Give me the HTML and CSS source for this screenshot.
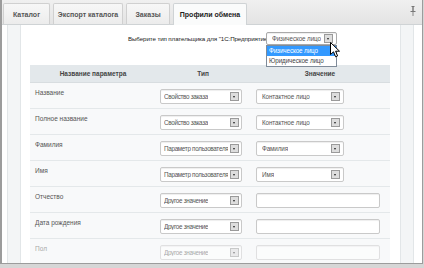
FILE: index.html
```html
<!DOCTYPE html>
<html>

<head>
	<title>Профили обмена</title>
	<link rel="stylesheet" href="styles.css">
</head>

<body>
	<div class="frame">
		<div class="tabs">
			<div class="tab t1">Каталог</div>
			<div class="tab t2">Экспорт каталога</div>
			<div class="tab t3">Заказы</div>
			<div class="tab active">Профили обмена</div>
			<div class="spacer"></div>
			<svg class="pin" width="6" height="10" viewBox="0 0 6 10">
				<rect x="1.5" y="0" width="3" height="1" fill="#777"/>
				<rect x="2" y="1" width="2" height="4" fill="#999"/>
				<rect x="0.5" y="5" width="5" height="1" fill="#777"/>
				<rect x="2.5" y="6" width="1" height="4" fill="#888"/>
			</svg>
		</div>
		<div class="body">
			<div class="rail"></div>
			<div class="content">
				<div class="payer">
					<span class="payer-label">Выберите тип плательщика для "1С:Предприятие":</span>
					<div class="payer-box">
						<div class="sel payer-sel"><span>Физическое лицо</span><i class="btn"></i></div>
						<ul class="list">
							<li class="on">Физическое лицо</li>
							<li>Юридическое лицо</li>
						</ul>
						<svg class="cursor" width="11" height="16" viewBox="0 0 11 16">
							<path d="M0.5 0.5 L0.5 12.5 L3.5 9.8 L5.6 14.8 L7.6 13.9 L5.6 9.2 L9.5 9.2 Z" fill="#fff" stroke="#000" stroke-width="1"/>
						</svg>
					</div>
				</div>
				<table class="params">
					<tr>
						<th class="c1">Название параметра</th>
						<th class="c2">Тип</th>
						<th class="c3">Значение</th>
					</tr>
					<tr>
						<td class="name">Название</td>
						<td><div class="sel type"><span>Свойство заказа</span><i class="btn"></i></div></td>
						<td><div class="sel val"><span>Контактное лицо</span><i class="btn"></i></div></td>
					</tr>
					<tr>
						<td class="name">Полное название</td>
						<td><div class="sel type"><span>Свойство заказа</span><i class="btn"></i></div></td>
						<td><div class="sel val"><span>Контактное лицо</span><i class="btn"></i></div></td>
					</tr>
					<tr>
						<td class="name">Фамилия</td>
						<td><div class="sel type"><span>Параметр пользователя</span><i class="btn"></i></div></td>
						<td><div class="sel val"><span>Фамилия</span><i class="btn"></i></div></td>
					</tr>
					<tr>
						<td class="name">Имя</td>
						<td><div class="sel type"><span>Параметр пользователя</span><i class="btn"></i></div></td>
						<td><div class="sel val"><span>Имя</span><i class="btn"></i></div></td>
					</tr>
					<tr>
						<td class="name">Отчество</td>
						<td><div class="sel type"><span>Другое значение</span><i class="btn"></i></div></td>
						<td><div class="field"></div></td>
					</tr>
					<tr>
						<td class="name">Дата рождения</td>
						<td><div class="sel type"><span>Другое значение</span><i class="btn"></i></div></td>
						<td><div class="field"></div></td>
					</tr>
					<tr class="faded">
						<td class="name">Пол</td>
						<td><div class="sel type"><span>Другое значение</span><i class="btn"></i></div></td>
						<td><div class="field"></div></td>
					</tr>
				</table>
			</div>
			<div class="rail right"></div>
		</div>
	</div>
</body>

</html>
```

FILE: styles.css
```css
html,
body {
	margin: 0;
	padding: 0;
}

body {
	background: #d6d6d6;
	font-family: "Liberation Sans", Arial, sans-serif;
	font-size: 8px;
	color: #444;
	width: 424px;
	height: 268px;
	overflow: hidden;
}

.frame {
	width: 420px;
	height: 263px;
	background: #fff;
	border: 1px solid #9c9c9c;
	border-top: 0;
	border-left-width: 2px;
	overflow: hidden;
}

.tabs {
	display: flex;
	align-items: flex-end;
	height: 25px;
	padding-left: 1px;
	gap: 3px;
	background: linear-gradient(#f0f0f0, #e4e4e4);
	border-bottom: 1px solid #cfd3d5;
	box-sizing: border-box;
}

.tab {
	height: 21px;
	line-height: 21px;
	text-align: center;
	font-weight: bold;
	font-size: 7px;
	color: #555;
	background: linear-gradient(#f7f7f7, #ececec);
	border: 1px solid #d0d0d0;
	border-bottom: 0;
	border-radius: 2px 2px 0 0;
	box-sizing: border-box;
}

.t1 {
	width: 47px;
}

.t2 {
	width: 70px;
}

.t3 {
	width: 44px;
}

.tab.active {
	width: 74px;
	height: 22px;
	margin-bottom: -1px;
	background: #fafbfb;
	color: #222;
	border-color: #cfd3d5;
}

.spacer {
	flex: 1;
}

.pin {
	margin: 0 6px 8px 0;
}

.body {
	display: flex;
	height: 238px;
}

.rail {
	width: 12px;
	margin-left: 5px;
	background: #f3f5f6;
	border-left: 1px solid #e2e6e8;
	border-right: 1px solid #e2e6e8;
}

.rail.right {
	margin-left: 0;
	margin-right: 8px;
}

.content {
	flex: 1;
	padding: 6px 0 0 9px;
}

.payer {
	display: flex;
	align-items: center;
	padding-left: 98px;
	height: 13px;
	margin-top: 1px;
}

.payer-label {
	flex: none;
	width: 134px;
	font-size: 6.2px;
	letter-spacing: -0.1px;
	color: #222;
	text-align: right;
	white-space: nowrap;
	padding-right: 4px;
}

.payer-box {
	position: relative;
}

.sel {
	display: flex;
	align-items: center;
	justify-content: space-between;
	box-sizing: border-box;
	height: 15px;
	padding: 0 3px 0 5px;
	background: #fff;
	border: 1px solid #c9c9c9;
	border-radius: 2px;
	box-shadow: inset 0 1px 1px #eee;
	font-size: 6.3px;
	letter-spacing: -0.1px;
	color: #555;
	white-space: nowrap;
	overflow: hidden;
}

.sel span {
	overflow: hidden;
}

.btn {
	flex: none;
	width: 7px;
	height: 7px;
	margin-left: 2px;
	background: #ddd;
	border: 1px solid #9a9a9a;
	position: relative;
}

.btn::after {
	content: "";
	position: absolute;
	left: 2px;
	top: 3px;
	border-left: 1.5px solid transparent;
	border-right: 1.5px solid transparent;
	border-top: 2px solid #222;
}

.payer-sel {
	width: 71px;
	height: 13px;
	border-color: #aaa;
}

.list {
	position: absolute;
	top: 13px;
	left: 0;
	width: 71px;
	margin: 0;
	padding: 0;
	list-style: none;
	background: #fff;
	border: 1px solid #7f8b99;
	box-sizing: border-box;
	z-index: 2;
	font-size: 6.3px;
	letter-spacing: -0.1px;
	color: #444;
}

.list li {
	height: 10px;
	line-height: 10px;
	padding-left: 2px;
}

.list li.on {
	background: #3399ff;
	color: #fff;
}

.cursor {
	position: absolute;
	left: 64px;
	top: 10px;
	z-index: 3;
}

.params {
	margin-top: 20px;
	width: 360px;
	border-collapse: collapse;
	table-layout: fixed;
	background: #f8f9fa;
}

.params th {
	height: 17px;
	padding: 0;
	background: #e3e8eb;
	font-size: 6.5px;
	font-weight: bold;
	color: #444;
	text-align: center;
	border-bottom: 1px solid #d8dde0;
}

.c1 {
	width: 126px;
}

.c2 {
	width: 94px;
}

.params td {
	height: 25px;
	padding: 0;
	vertical-align: top;
	border-bottom: 1px solid #e4e8ea;
}

.params td.name {
	padding: 6px 0 0 5px;
	font-size: 6.5px;
	color: #555;
	height: 19px;
}

.params td .sel,
.params td .field {
	margin-top: 6px;
}

.type {
	width: 82px;
	margin-left: 4px;
	padding-left: 3px;
	padding-right: 2px;
	letter-spacing: -0.3px;
}

.val {
	width: 88px;
	margin-left: 6px;
}

.field {
	width: 124px;
	height: 15px;
	margin-left: 6px;
	box-sizing: border-box;
	background: #fff;
	border: 1px solid #c9c9c9;
	border-radius: 2px;
	box-shadow: inset 0 1px 1px #eee;
}

.faded td {
	opacity: 0.5;
}
```
